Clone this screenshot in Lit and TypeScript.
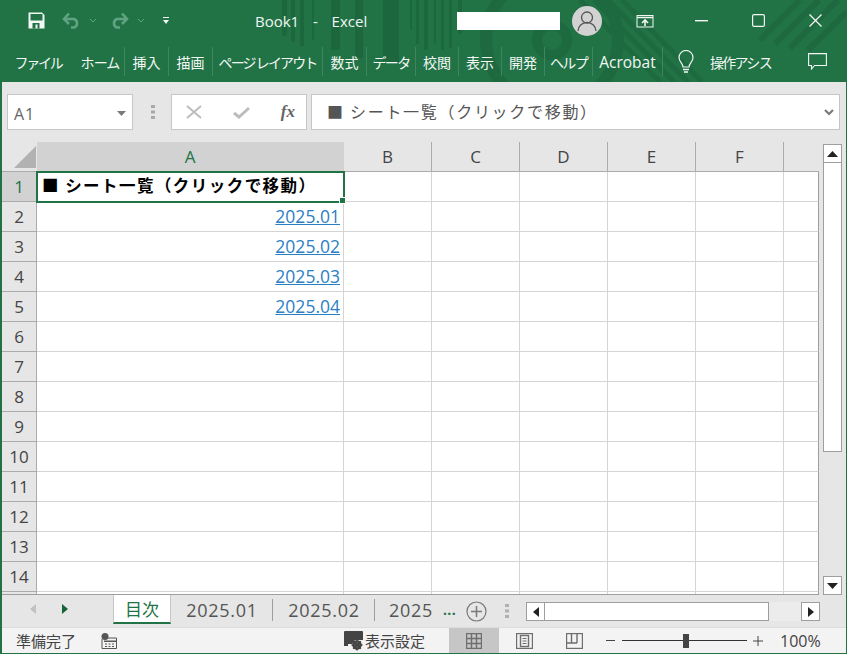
import { LitElement, html, css, svg } from "lit";
import { customElement } from "lit/decorators.js";

const RIBBON = [
  { label: "ファイル", w: 76, sp: -2.2 },
  { label: "ホーム", w: 49, sp: -0.9 },
  { label: "挿入", w: 44, sp: 0 },
  { label: "描画", w: 44, sp: 0 },
  { label: "ページ レイアウト", w: 110, sp: -1.9 },
  { label: "数式", w: 44, sp: 0 },
  { label: "データ", w: 49, sp: -1.6 },
  { label: "校閲", w: 43, sp: 0 },
  { label: "表示", w: 43, sp: 0 },
  { label: "開発", w: 43, sp: 0 },
  { label: "ヘルプ", w: 48, sp: -1.6 },
  { label: "Acrobat", w: 70, sp: 0 },
];

const COLS = ["A", "B", "C", "D", "E", "F", ""];
const LINKS: Record<number, string> = { 2: "2025.01", 3: "2025.02", 4: "2025.03", 5: "2025.04" };
const ROWS = Array.from({ length: 15 }, (_, i) => i + 1);

// faint artwork behind the title bar
const pattern = svg`
  <g fill="#1a5e39" opacity="0.55">
    <rect x="282" y="0" width="5" height="36"/><rect x="291" y="0" width="4" height="42"/>
    <rect x="300" y="0" width="4" height="46"/><rect x="312" y="0" width="2" height="40"/>
    <rect x="331" y="0" width="9" height="50"/><rect x="355" y="0" width="8" height="58"/>
    <rect x="383" y="0" width="16" height="62"/><rect x="410" y="0" width="2" height="30"/>
    <rect x="416" y="0" width="3" height="44"/><rect x="424" y="0" width="4" height="50"/>
    <rect x="434" y="0" width="2" height="44"/><rect x="441" y="0" width="3" height="50"/>
    <rect x="449" y="0" width="3" height="48"/><rect x="458" y="0" width="4" height="34"/>
  </g>
  <g fill="none" stroke="#1a5e39" opacity="0.45">
    <circle cx="552" cy="40" r="15" stroke-width="10"/>
    <circle cx="552" cy="40" r="66" stroke-width="12"/>
    <path d="M580 0 L660 82 M594 0 L674 82 M608 0 L688 82 M622 0 L702 82" stroke-width="5"/>
    <path d="M760 40 L800 0 M775 44 L819 0 M790 48 L838 0 M808 50 L847 12" stroke-width="6"/>
  </g>`;

@customElement("app-root")
export class AppRoot extends LitElement {
  static styles = css`
    :host {
      display: block;
      width: 847px;
      height: 655px;
      background: #fff;
      font-family: "Open Sans", "Noto Sans CJK JP", sans-serif;
      color: #444;
      overflow: hidden;
    }
    svg { display: block; flex: none; }
    .window {
      width: 844px;
      height: 653px;
      border-left: 2px solid #217346;
      border-right: 1px solid #217346;
      border-bottom: 1px solid #217346;
      display: flex;
      flex-direction: column;
      background: #e6e6e6;
    }

    /* title bar and ribbon tabs */
    .chrome {
      position: relative;
      height: 82px;
      margin-left: -2px;
      margin-right: -1px;
      background: #217346;
      color: #f2f7f4;
      overflow: hidden;
      flex: none;
    }
    .art { position: absolute; inset: 0; }
    .title {
      position: relative;
      height: 41px;
      display: flex;
      align-items: center;
      padding-left: 28px;
    }
    .undo { margin-left: 17px; }
    .chev { margin-left: 8px; }
    .redo { margin-left: 13px; }
    .qat { margin-left: 18px; }
    .doc { margin-left: 85px; width: 202px; font-size: 15px; word-spacing: 3px; flex: none; white-space: pre; }
    .user { width: 103px; height: 18px; background: #fff; flex: none; }
    .avatar {
      width: 30px;
      height: 30px;
      margin-left: 12px;
      border-radius: 50%;
      background: #d2d2d2;
      display: flex;
      align-items: center;
      justify-content: center;
      flex: none;
    }
    .disp { margin-left: 34px; }
    .min { margin-left: 41px; }
    .max { margin-left: 44px; }
    .close { margin-left: 44px; }
    .tabs {
      position: relative;
      height: 41px;
      display: flex;
      align-items: center;
      font-family: "Noto Sans CJK JP", sans-serif;
      font-size: 14px;
    }
    .rt {
      height: 29px;
      display: flex;
      align-items: center;
      justify-content: center;
      box-sizing: border-box;
      border-right: 1px solid #3f8660;
      white-space: nowrap;
      flex: none;
    }
    .rt.first { border-right: none; }
    .rt.latin { font-family: "Open Sans", sans-serif; font-size: 15.5px; }
    .bulb { margin-left: 15px; }
    .assist { margin-left: 16px; letter-spacing: -1.7px; white-space: nowrap; font-size: 14px; }
    .comment { margin-left: 37px; }

    /* name box and formula bar */
    .formula {
      height: 60px;
      flex: none;
      display: flex;
      align-items: center;
      padding: 0 6px 0 5px;
    }
    .box {
      height: 36px;
      box-sizing: border-box;
      border: 1px solid #c6c6c6;
      background: #fff;
      display: flex;
      align-items: center;
      flex: none;
    }
    .name { width: 126px; padding: 3px 6px 0; justify-content: space-between; font-size: 16px; color: #666; letter-spacing: 1px; }
    .grip { margin: 0 16px 0 18px; }
    .fx { width: 136px; padding: 0 11px 0 14px; justify-content: space-between; }
    .fx i { font: italic 700 17px "Liberation Serif", serif; color: #666; }
    .input {
      flex: 1;
      margin-left: 4px;
      padding: 0 5px 3px 15px;
      justify-content: space-between;
      font-family: "Noto Sans CJK JP", sans-serif;
      font-size: 16px;
      color: #555;
      letter-spacing: 1.7px;
    }
    .input svg { margin-top: 3px; }

    /* sheet */
    .sheet { flex: none; height: 453px; display: flex; overflow: hidden; }
    .grid {
      width: 817px;
      height: 453px;
      overflow: hidden;
      display: grid;
      grid-template-columns: 35px 307px repeat(5, 88px) 35px;
      grid-auto-rows: 30px;
      background: #fff;
      box-sizing: border-box;
      border-bottom: 1px solid #9e9e9e;
      flex: none;
    }
    .ch, .rh {
      background: #e6e6e6;
      box-sizing: border-box;
      display: flex;
      align-items: center;
      justify-content: center;
      font-size: 17px;
      color: #444;
      border-bottom: 1px solid #ababab;
    }
    .ch { border-right: 1px solid #ababab; }
    .ch.end { border-right: none; }
    .ch.on { background: #d2d2d2; color: #217346; border-right-color: #d2d2d2; }
    .corner { background: #e6e6e6; border-bottom: 1px solid #ababab; display: flex; align-items: flex-end; justify-content: flex-end; }
    .rh { border-right: 1px solid #ababab; }
    .rh.on { background: #d2d2d2; color: #217346; }
    .c {
      box-sizing: border-box;
      border-right: 1px solid #d4d4d4;
      border-bottom: 1px solid #d4d4d4;
      display: flex;
      align-items: center;
      justify-content: flex-end;
      padding: 0 3px 1px 0;
      font-size: 17.5px;
    }
    .c.end { border-right: 1px solid #9e9e9e; }
    .c a { color: #2b80c4; text-decoration: underline; }
    .c.sel {
      position: relative;
      justify-content: flex-start;
      padding: 0 0 3px 5px;
      font-family: "Noto Sans CJK JP", sans-serif;
      font-weight: 700;
      font-size: 16.5px;
      color: #000;
      white-space: nowrap;
      letter-spacing: 1.45px;
      outline: 2px solid #217346;
      outline-offset: -1px;
      z-index: 1;
    }
    .c.sel::after {
      content: "";
      position: absolute;
      right: -2px;
      bottom: -2px;
      width: 5px;
      height: 5px;
      background: #217346;
      border: 1px solid #fff;
      box-sizing: content-box;
      margin: -1px;
    }

    .vbar {
      width: 19px;
      margin: 2px 0 0 4px;
      height: 451px;
      display: flex;
      flex-direction: column;
      flex: none;
    }
    .btn {
      box-sizing: border-box;
      width: 19px;
      height: 19px;
      background: #fff;
      border: 1px solid #9e9e9e;
      display: flex;
      align-items: center;
      justify-content: center;
      flex: none;
    }
    .vthumb { height: 289px; box-sizing: border-box; background: #fff; border: 1px solid #9e9e9e; border-top: none; flex: none; }
    .vbar .spacer { flex: 1; }

    /* sheet tabs */
    .strip { height: 32px; flex: none; display: flex; align-items: flex-start; box-sizing: border-box; }
    .nav { width: 111px; height: 28px; display: flex; align-items: center; padding-left: 28px; gap: 26px; box-sizing: border-box; flex: none; }
    .tab {
      height: 29px;
      box-sizing: border-box;
      display: flex;
      align-items: center;
      justify-content: center;
      font-size: 18px;
      letter-spacing: 0.7px;
      color: #555;
      flex: none;
      white-space: nowrap;
    }
    .tab.on {
      width: 58px;
      background: #fff;
      color: #217346;
      border-bottom: 2px solid #217346;
      border-left: 1px solid #c6c6c6;
      border-right: 1px solid #c6c6c6;
      font-family: "Noto Sans CJK JP", sans-serif;
      font-size: 17px;
      letter-spacing: 0;
    }
    .tab.plain { width: 102px; position: relative; }
    .tab.plain::after { content: ""; position: absolute; right: 0; top: 4px; bottom: 3px; width: 1px; background: #9e9e9e; }
    .tab.cut { width: 84px; justify-content: flex-start; padding-left: 14px; }
    .tab.cut b { margin-left: 10px; color: #217346; font-weight: 700; font-size: 14px; letter-spacing: 0.4px; }
    .plus { margin: 6px 0 0 7px; }
    .sgrip { margin: 9px 0 0 18px; }
    .hbar { display: flex; align-items: center; margin: 7px 0 0 17px; }
    .hthumb { width: 224px; height: 19px; box-sizing: border-box; background: #fff; border: 1px solid #9e9e9e; border-left: none; flex: none; }
    .hrest { width: 32px; height: 19px; background: #ececec; flex: none; }

    /* status bar */
    .status {
      flex: none;
      height: 26px;
      display: flex;
      align-items: center;
      background: #f3f3f3;
      font-family: "Noto Sans CJK JP", sans-serif;
      font-size: 15px;
      color: #444;
      border-top: 1px solid #dcdcdc;
      box-sizing: border-box;
    }
    .ready { margin-left: 14px; width: 85px; }
    .rec { margin-right: 227px; }
    .set { margin-left: 2px; width: 84px; }
    .view { width: 50px; height: 100%; display: flex; align-items: center; justify-content: center; flex: none; }
    .view.on { background: #c6c6c6; }
    .view svg { stroke: #6e6e6e; stroke-width: 1.4; }
    .zm { margin-left: 7px; }
    .slider { width: 125px; height: 1px; background: #333; margin: 0 6px 0 7px; display: flex; align-items: center; justify-content: center; flex: none; }
    .slider span { width: 6px; height: 14px; background: #444; margin-left: 2px; }
    .pct { margin-left: 17px; font-family: "Open Sans", sans-serif; font-size: 16px; }
  `;

  private head() {
    return html`
      <div class="corner">
        <svg width="33" height="29"><path d="M10 26 L32 4 V26 Z" fill="#b2b2b2"/></svg>
      </div>
      ${COLS.map(
        (c, i) => html`<div class="ch ${c === "A" ? "on" : ""} ${i === 6 ? "end" : ""}">${c}</div>`
      )}
    `;
  }

  private row(n: number) {
    return html`
      <div class="rh ${n === 1 ? "on" : ""}">${n}</div>
      ${COLS.map((_, i) => {
        if (i === 0 && n === 1) return html`<div class="c sel">■ シート一覧（クリックで移動）</div>`;
        const link = i === 0 ? LINKS[n] : undefined;
        return html`<div class="c ${i === 6 ? "end" : ""}">${link ? html`<a>${link}</a>` : ""}</div>`;
      })}
    `;
  }

  render() {
    return html`
      <div class="window">
        <div class="chrome">
          <svg class="art" width="847" height="82">${pattern}</svg>
          <div class="title">
            <svg width="17" height="17" viewBox="0 0 17 17">
              <path d="M0.5 0.5 H14 L16.5 3 V16.5 H0.5 Z" fill="#f2f7f4"/>
              <rect x="2.5" y="2" width="12" height="6.5" fill="#217346"/>
              <path d="M4.5 16.5 V11 H11.5 V16.5 H9.5 V12.5 H7.5 V16.5 Z" fill="#217346"/>
            </svg>
            <svg class="undo" width="19" height="17" viewBox="0 0 19 17" fill="none" stroke="#5fa382" stroke-width="2.6">
              <path d="M2 7 H12 A4.5 4.5 0 0 1 12 15.5 H9"/><path d="M7 1.5 L2 7 L7 12"/>
            </svg>
            <svg class="chev" width="8" height="5" fill="none" stroke="#5fa382"><path d="M1 1 L4 4 L7 1"/></svg>
            <svg class="redo" width="19" height="17" viewBox="0 0 19 17" fill="none" stroke="#5fa382" stroke-width="2.6">
              <path d="M17 7 H7 A4.5 4.5 0 0 0 7 15.5 H10"/><path d="M12 1.5 L17 7 L12 12"/>
            </svg>
            <svg class="chev" width="8" height="5" fill="none" stroke="#5fa382"><path d="M1 1 L4 4 L7 1"/></svg>
            <svg class="qat" width="7" height="8" fill="#f2f7f4"><rect x="0" y="0" width="6" height="1"/><path d="M0 3 H6 L3 7 Z"/></svg>
            <span class="doc">Book1  -  Excel</span>
            <div class="user"></div>
            <div class="avatar">
              <svg width="20" height="22" viewBox="0 0 20 22" fill="none" stroke="#555" stroke-width="1.3">
                <circle cx="10" cy="7.5" r="5.5"/><path d="M1 21 A9 8.5 0 0 1 19 21"/>
              </svg>
            </div>
            <svg class="disp" width="18" height="14" viewBox="0 0 18 14" fill="none" stroke="#f2f7f4">
              <rect x="1" y="1.5" width="16" height="11.5"/><path d="M1 3.5 H17" stroke-width="1.5"/>
              <path d="M9 12 V6.5 M6 9 L9 6 L12 9" stroke-width="1.6"/>
            </svg>
            <svg class="min" width="13" height="2"><rect width="13" height="1.4" fill="#f2f7f4"/></svg>
            <svg class="max" width="13" height="13" fill="none" stroke="#f2f7f4" stroke-width="1.2"><rect x="0.6" y="0.6" width="11.8" height="11.8" rx="1.5"/></svg>
            <svg class="close" width="13" height="13" fill="none" stroke="#f2f7f4" stroke-width="1.3"><path d="M0.5 0.5 L12.5 12.5 M12.5 0.5 L0.5 12.5"/></svg>
          </div>
          <div class="tabs">
            ${RIBBON.map(
              (r, i) => html`<div
                class="rt ${i === 0 ? "first" : ""} ${r.label === "Acrobat" ? "latin" : ""}"
                style="width:${r.w}px;letter-spacing:${r.sp}px"
              >${r.label}</div>`
            )}
            <svg class="bulb" width="16" height="24" viewBox="0 0 16 24" fill="none" stroke="#f2f7f4" stroke-width="1.2">
              <path d="M5 17 C5 13 1 12 1 7.5 A7 7 0 0 1 15 7.5 C15 12 11 13 11 17 Z"/>
              <path d="M5 19.5 H11 M6 22 H10" stroke-width="1.6"/>
            </svg>
            <span class="assist">操作アシス</span>
            <svg class="comment" width="19" height="17" viewBox="0 0 19 17" fill="none" stroke="#f2f7f4" stroke-width="1.1">
              <path d="M0.6 0.6 H18.4 V12.5 H6.5 L3.5 16 V12.5 H0.6 Z"/>
            </svg>
          </div>
        </div>

        <div class="formula">
          <div class="box name">
            <span>A1</span>
            <svg width="9" height="5"><path d="M0 0 H9 L4.5 5 Z" fill="#7a7a7a"/></svg>
          </div>
          <svg class="grip" width="4" height="14" fill="#a8a8a8"><rect width="4" height="3"/><rect y="5.5" width="4" height="3"/><rect y="11" width="4" height="3"/></svg>
          <div class="box fx">
            <svg width="16" height="14" fill="none" stroke="#bdbdbd" stroke-width="2"><path d="M1 1 L15 13 M15 1 L1 13"/></svg>
            <svg width="17" height="13" fill="none" stroke="#bdbdbd" stroke-width="3"><path d="M1 7 L6 11 L16 2"/></svg>
            <i>fx</i>
          </div>
          <div class="box input">
            <span>■ シート一覧（クリックで移動）</span>
            <svg width="10" height="7" fill="none" stroke="#7a7a7a" stroke-width="2.2"><path d="M1 1 L5 5 L9 1"/></svg>
          </div>
        </div>

        <div class="sheet">
          <div class="grid">
            ${this.head()}
            ${ROWS.map((n) => this.row(n))}
          </div>
          <div class="vbar">
            <div class="btn"><svg width="11" height="6"><path d="M0 6 L5.5 0 L11 6 Z" fill="#222"/></svg></div>
            <div class="vthumb"></div>
            <div class="spacer"></div>
            <div class="btn"><svg width="11" height="6"><path d="M0 0 L5.5 6 L11 0 Z" fill="#222"/></svg></div>
          </div>
        </div>

        <div class="strip">
          <div class="nav">
            <svg width="6" height="10"><path d="M6 0 V10 L0 5 Z" fill="#c2c2c2"/></svg>
            <svg width="6" height="10"><path d="M0 0 V10 L6 5 Z" fill="#17633a"/></svg>
          </div>
          <div class="tab on">目次</div>
          <div class="tab plain">2025.01</div>
          <div class="tab plain">2025.02</div>
          <div class="tab cut">2025<b>...</b></div>
          <svg class="plus" width="21" height="21" fill="none" stroke="#7a7a7a"><circle cx="10.5" cy="10.5" r="9.5" stroke-width="1.2"/><path d="M10.5 5 V16 M5 10.5 H16" stroke-width="1.5"/></svg>
          <svg class="sgrip" width="4" height="14" fill="#b0b0b0"><rect width="4" height="3"/><rect y="5.5" width="4" height="3"/><rect y="11" width="4" height="3"/></svg>
          <div class="hbar">
            <div class="btn"><svg width="6" height="10"><path d="M6 0 V10 L0 5 Z" fill="#222"/></svg></div>
            <div class="hthumb"></div>
            <div class="hrest"></div>
            <div class="btn"><svg width="6" height="10"><path d="M0 0 V10 L6 5 Z" fill="#222"/></svg></div>
          </div>
        </div>

        <div class="status">
          <span class="ready">準備完了</span>
          <svg class="rec" width="16" height="16" viewBox="0 0 16 16">
            <circle cx="4" cy="3.5" r="3.5" fill="#555"/>
            <path d="M2 5 H15.5 V15.5 H1 V6" fill="none" stroke="#555"/>
            <path d="M3 7.5 H15 V9 H3 Z" fill="#555"/>
            <path d="M4 11 H6 M7.5 11 H9.5 M11 11 H13 M4 13.5 H6 M7.5 13.5 H9.5 M11 13.5 H13" stroke="#555"/>
          </svg>
          <svg width="19" height="20" viewBox="0 0 19 20">
            <path d="M0 1 Q0 0 1 0 H18 Q19 0 19 1 V9 H11 L8 13 H4 V15 H0 Z" fill="#444"/>
            <circle cx="13" cy="14" r="3.6" fill="none" stroke="#444" stroke-width="2.4"/>
            <path d="M13 8.5 V19.5 M7.5 14 H18.5 M9.2 10.2 L16.8 17.8 M16.8 10.2 L9.2 17.8" stroke="#444" stroke-width="1.4"/>
          </svg>
          <span class="set">表示設定</span>
          <div class="view on">
            <svg width="16" height="16" fill="none"><path d="M0.5 0.5 H15.5 V15.5 H0.5 Z M5.5 0.5 V15.5 M10.5 0.5 V15.5 M0.5 5.5 H15.5 M0.5 10.5 H15.5"/></svg>
          </div>
          <div class="view">
            <svg width="17" height="16" fill="none"><rect x="0.5" y="0.5" width="16" height="15"/><rect x="4.5" y="2.5" width="8" height="11"/><path d="M6.5 5.5 H10.5 M6.5 8 H10.5 M6.5 10.5 H10.5" stroke-width="1"/></svg>
          </div>
          <div class="view">
            <svg width="17" height="16" fill="none"><rect x="0.5" y="0.5" width="16" height="15"/><path d="M5.5 0.5 V10 M11 0.5 V10 M0.5 10 H11"/></svg>
          </div>
          <svg class="zm" width="9" height="2"><rect width="9" height="1" fill="#444"/></svg>
          <div class="slider"><span></span></div>
          <svg width="10" height="10"><path d="M5 0 V10 M0 5 H10" stroke="#444"/></svg>
          <span class="pct">100%</span>
        </div>
      </div>
    `;
  }
}
